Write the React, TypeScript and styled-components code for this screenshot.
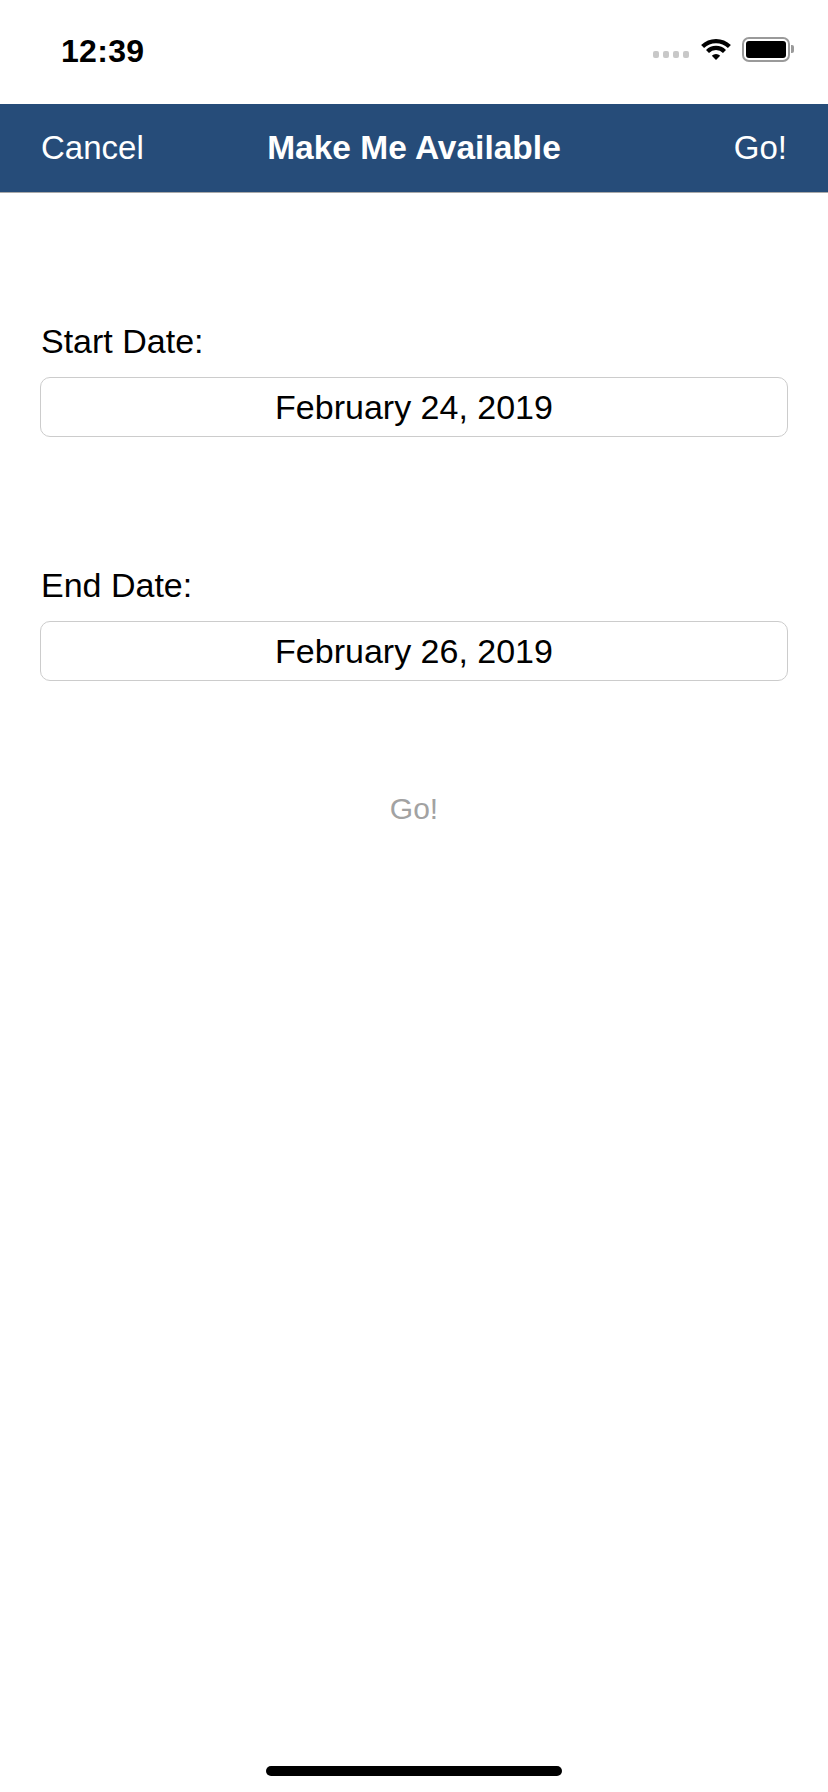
import React from 'react';
import styled, { createGlobalStyle } from 'styled-components';

const GlobalStyle = createGlobalStyle`
  html, body {
    margin: 0;
    padding: 0;
    background: #ffffff;
  }
  body {
    font-family: "Liberation Sans", Arial, sans-serif;
    -webkit-font-smoothing: antialiased;
  }
`;

const WifiIcon: React.FC = () => (
  <svg width="32" height="24" viewBox="0 0 32 24">
    <path d="M2.6 9.6 A19 19 0 0 1 29.4 9.6" fill="none" stroke="#000" strokeWidth="4.2" />
    <path d="M7.5 14.5 A12 12 0 0 1 24.5 14.5" fill="none" stroke="#000" strokeWidth="4.2" />
    <path d="M16 23 L11.8 18.8 A6 6 0 0 1 20.2 18.8 Z" fill="#000" />
  </svg>
);

const App: React.FC = () => {
  return (
    <Root>
      <GlobalStyle />
      <StatusBar>
        <Clock>12:39</Clock>
        <StatusIcons>
          <Signal>
            <Dot />
            <Dot />
            <Dot />
            <Dot />
          </Signal>
          <WifiIcon />
          <Battery>
            <BatteryBody>
              <BatteryLevel />
            </BatteryBody>
            <BatteryNub />
          </Battery>
        </StatusIcons>
      </StatusBar>

      <NavBar>
        <NavButton $align="start">Cancel</NavButton>
        <NavTitle>Make Me Available</NavTitle>
        <NavButton $align="end">Go!</NavButton>
      </NavBar>

      <Content>
        <Field>
          <Label>Start Date:</Label>
          <DateBox>February 24, 2019</DateBox>
        </Field>
        <Field $gap={128}>
          <Label>End Date:</Label>
          <DateBox>February 26, 2019</DateBox>
        </Field>
        <SubmitButton disabled>Go!</SubmitButton>
      </Content>

      <HomeIndicator />
    </Root>
  );
};

export default App;

const Root = styled.div`
  display: flex;
  flex-direction: column;
  min-height: 1792px;
  width: 828px;
  background: #ffffff;
`;

const StatusBar = styled.div`
  display: flex;
  align-items: center;
  justify-content: space-between;
  height: 104px;
  padding: 0 34px 6px 61px;
  box-sizing: border-box;
`;

const Clock = styled.span`
  font-size: 32px;
  font-weight: 700;
  color: #000;
  margin-top: 5px;
  letter-spacing: 0.3px;
`;

const StatusIcons = styled.div`
  display: flex;
  align-items: center;
  gap: 10px;
`;

const Signal = styled.div`
  display: flex;
  align-items: center;
  gap: 4px;
  margin-top: 10px;
  margin-right: 1px;
`;

const Dot = styled.span`
  width: 6px;
  height: 7px;
  border-radius: 2px;
  background: #c8c8c8;
`;

const Battery = styled.div`
  display: flex;
  align-items: center;
  gap: 1px;
`;

const BatteryBody = styled.div`
  width: 48px;
  height: 25px;
  box-sizing: border-box;
  border: 2px solid #9a9a9a;
  border-radius: 7px;
  padding: 2px;
`;

const BatteryLevel = styled.div`
  width: 100%;
  height: 100%;
  background: #000;
  border-radius: 3px;
`;

const BatteryNub = styled.div`
  width: 3px;
  height: 8px;
  background: #9a9a9a;
  border-radius: 0 2px 2px 0;
`;

const NavBar = styled.div`
  display: grid;
  grid-template-columns: 1fr auto 1fr;
  align-items: center;
  height: 88px;
  padding: 0 41px;
  background: #264c79;
  border-bottom: 1px solid #a9a9a9;
  color: #ffffff;
`;

const NavButton = styled.span<{ $align: 'start' | 'end' }>`
  justify-self: ${(p) => p.$align};
  font-size: 33px;
  font-weight: 400;
`;

const NavTitle = styled.span`
  font-size: 33.5px;
  font-weight: 700;
`;

const Content = styled.div`
  display: flex;
  flex-direction: column;
  padding: 128px 40px 0;
`;

const Field = styled.div<{ $gap?: number }>`
  display: flex;
  flex-direction: column;
  gap: 16px;
  margin-top: ${(p) => p.$gap ?? 0}px;
`;

const Label = styled.label`
  font-size: 34px;
  line-height: 40px;
  color: #000;
  padding-left: 1px;
`;

const DateBox = styled.div`
  display: flex;
  align-items: center;
  justify-content: center;
  height: 60px;
  box-sizing: border-box;
  border: 1px solid #cccccc;
  border-radius: 10px;
  font-size: 34px;
  color: #000;
`;

const SubmitButton = styled.button`
  align-self: center;
  margin-top: 108px;
  border: none;
  background: none;
  padding: 0;
  font-family: "Liberation Sans", Arial, sans-serif;
  font-size: 30px;
  line-height: 40px;
  color: #a2a2a2;
`;

const HomeIndicator = styled.div`
  margin: auto auto 16px;
  width: 296px;
  height: 10px;
  border-radius: 5px;
  background: #000;
`;
